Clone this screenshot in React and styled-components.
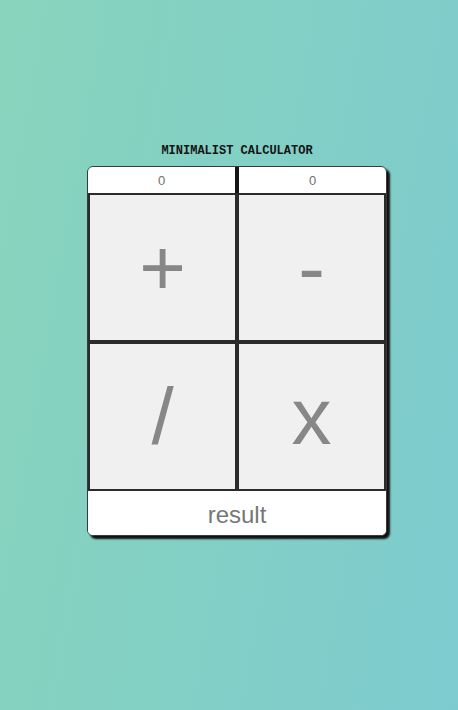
import React from 'react';
import styled, { createGlobalStyle } from 'styled-components';

const GlobalStyle = createGlobalStyle`
  html, body {
    margin: 0;
    padding: 0;
  }
  body {
    min-height: 100vh;
    background: linear-gradient(100deg, #88d4bc 0%, #7dcbcf 100%);
    font-family: "Liberation Sans", Arial, sans-serif;
  }
`;

const Page = styled.div`
  display: flex;
  flex-direction: column;
  align-items: center;
  padding: 144px 0 0 16px;
  min-height: 100vh;
  box-sizing: border-box;
`;

const Title = styled.h1`
  margin: 0 0 8px;
  font-family: "Liberation Mono", "DejaVu Sans Mono", monospace;
  font-size: 12px;
  line-height: 14px;
  font-weight: bold;
  color: #141414;
`;

const Card = styled.div`
  width: 300px;
  box-sizing: border-box;
  border: 1px solid #3a3a3a;
  border-radius: 6px;
  overflow: hidden;
  background: #fff;
  box-shadow: 3px 3px 2px #111;
`;

const Inputs = styled.div`
  display: flex;
  gap: 4px;
  background: #151515;
`;

const NumberField = styled.input`
  flex: 1;
  min-width: 0;
  height: 26px;
  margin: 0;
  padding: 0;
  border: none;
  outline: none;
  background: #fff;
  text-align: center;
  font-family: "Liberation Sans", Arial, sans-serif;
  font-size: 13px;
  color: #6f6f6f;
`;

const Pad = styled.div`
  display: grid;
  grid-template-columns: 1fr 1fr;
`;

const OpButton = styled.button`
  height: 149px;
  margin: 0;
  padding: 0;
  border: 2px solid #2b2b2b;
  background: #f0f0f0;
  color: #878787;
  font-family: "Liberation Sans", Arial, sans-serif;
  font-size: 80px;
  line-height: 1;
  cursor: pointer;
`;

const Result = styled.div`
  height: 44px;
  display: flex;
  align-items: center;
  justify-content: center;
  background: #fff;
  color: #777;
  font-size: 24px;
  padding-top: 4px;
  box-sizing: border-box;
`;

export default function App() {
  const ops = ['+', '-', '/', 'x'];
  return (
    <>
      <GlobalStyle />
      <Page>
        <Title>MINIMALIST CALCULATOR</Title>
        <Card>
          <Inputs>
            <NumberField type="text" defaultValue="0" />
            <NumberField type="text" defaultValue="0" />
          </Inputs>
          <Pad>
            {ops.map((op) => (
              <OpButton key={op}>{op}</OpButton>
            ))}
          </Pad>
          <Result>result</Result>
        </Card>
      </Page>
    </>
  );
}
